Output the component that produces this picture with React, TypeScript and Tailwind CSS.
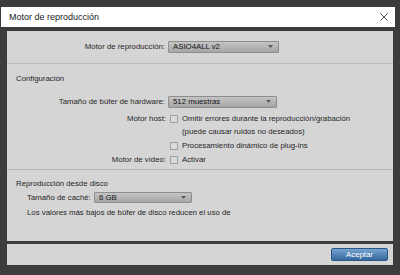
import React from "react";

function Dropdown({ value, w, h = 12 }: { value: string; w: string; h?: number }) {
  return (
    <div
      className={`${w} relative flex items-center rounded-[1px] border border-[#8e8e8e] bg-gradient-to-b from-[#c4c4c4] to-[#a6a6a6] pl-[4px] text-[#151515]`}
      style={{ height: h }}
    >
      <span className="leading-none">{value}</span>
      <svg className="absolute right-[5px] top-[3px]" width="5" height="3" viewBox="0 0 5 3">
        <path d="M0 0 L5 0 L2.5 3 Z" fill="#5a5a5a" />
      </svg>
    </div>
  );
}

function Check() {
  return <div className="w-[8px] h-[8px] border border-[#a0a0a0] bg-[#dadada] shrink-0" />;
}

export default function App() {
  return (
    <div className="w-[400px] h-[275px] bg-[#3c3c3c] overflow-hidden font-['Liberation_Sans',Arial,sans-serif] text-[7.8px] text-[#262626]">
      <div className="pt-[7px] pl-[1px]">
        <div className="w-[394px] h-[20px] bg-white flex items-center justify-between pl-[8px] pr-[7px]">
          <span className="text-[9px] text-[#1a1a1a] leading-none">Motor de reproducción</span>
          <svg width="8" height="8" viewBox="0 0 8 8">
            <path d="M0.5 0.5 L7.5 7.5 M7.5 0.5 L0.5 7.5" stroke="#333" strokeWidth="0.9" />
          </svg>
        </div>
      </div>
      <div className="px-[7px] pt-[4px]">
        <div className="h-[210px] bg-[#d5d5d5] flex flex-col">
          {/* section 1 */}
          <div className="h-[32px] flex items-center">
            <div className="w-[158px] text-right leading-none">Motor de reproducción:</div>
            <div className="ml-[3px]">
              <Dropdown value="ASIO4ALL v2" w="w-[111px]" />
            </div>
          </div>
          <div className="h-px bg-[#b9b9b9]" />
          {/* section 2 */}
          <div className="flex flex-col">
            <div className="mt-[10px] h-[10px] pl-[9px] flex items-center leading-none">Configuración</div>
            <div className="mt-[12px] flex items-center">
              <div className="w-[158px] text-right leading-none">Tamaño de búfer de hardware:</div>
              <div className="ml-[3px]">
                <Dropdown value="512 muestras" w="w-[109px]" />
              </div>
            </div>
            <div className="mt-[7px] h-[8px] flex items-center">
              <div className="w-[159px] text-right leading-none">Motor host:</div>
              <div className="ml-[4px]">
                <Check />
              </div>
              <div className="ml-[4px] leading-none">Omitir errores durante la reproducción/grabación</div>
            </div>
            <div className="mt-[4px] h-[10px] pl-[175px] flex items-center leading-none">
              (puede causar ruidos no deseados)
            </div>
            <div className="mt-[5px] h-[8px] flex items-center pl-[163px]">
              <Check />
              <div className="ml-[4px] leading-none">Procesamiento dinámico de plug-ins</div>
            </div>
            <div className="mt-[6px] h-[8px] flex items-center">
              <div className="w-[159px] text-right leading-none">Motor de vídeo:</div>
              <div className="ml-[4px]">
                <Check />
              </div>
              <div className="ml-[4px] leading-none">Activar</div>
            </div>
          </div>
          <div className="mt-[5px] h-px bg-[#b9b9b9]" />
          {/* section 3 */}
          <div className="flex flex-col">
            <div className="mt-[9px] h-[10px] pl-[9px] flex items-center leading-none">Reproducción desde disco</div>
            <div className="mt-[3px] pl-[20px] flex items-center">
              <div className="w-[67px] leading-none">Tamaño de caché:</div>
              <div className="ml-[0px]">
                <Dropdown value="6 GB" w="w-[98px]" h={11} />
              </div>
            </div>
            <div className="mt-[5px] h-[10px] pl-[20px] flex items-center leading-none">
              Los valores más bajos de búfer de disco reducen el uso de
            </div>
          </div>
        </div>
        <div className="h-[3px]" />
        <div className="h-[21px] bg-[#d5d5d5] flex items-center justify-end pr-[5px]">
          <div className="w-[57px] h-[13px] rounded-[2px] border border-[#2b5582] bg-gradient-to-b from-[#76a5d3] to-[#35679b] flex items-center justify-center text-white leading-none">
            Aceptar
          </div>
        </div>
      </div>
    </div>
  );
}
